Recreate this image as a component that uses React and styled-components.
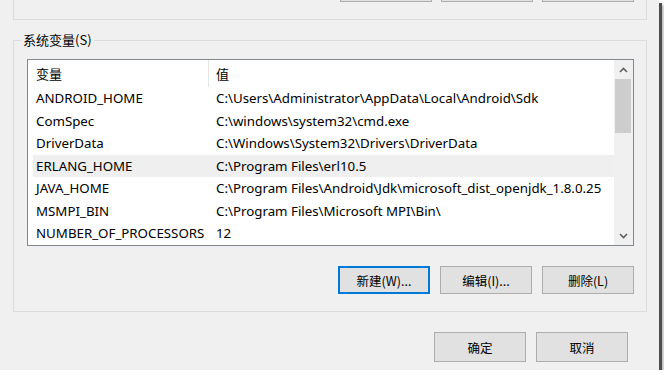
import React from "react";
import styled, { createGlobalStyle } from "styled-components";

const GlobalStyle = createGlobalStyle`
  html, body {
    margin: 0;
    padding: 0;
    background: #ffffff;
  }
  body {
    font-family: "Noto Sans", "Noto Sans CJK SC", sans-serif;
    font-size: 13.3px;
    color: #000;
  }
`;

const Window = styled.div`
  width: 659px;
  height: 370px;
  box-sizing: border-box;
  padding: 0 12px 0 13px;
  background: #f0f0f0;
  overflow: hidden;
  display: flex;
  flex-direction: column;
  box-shadow: 3px 3px 0 #4d4d4d, 5px 5px 2px rgba(0, 0, 0, 0.25);
`;

const TopGroup = styled.div`
  margin-top: -40px;
  height: 60px;
  box-sizing: border-box;
  border: 1px solid #dcdcdc;
  display: flex;
  align-items: flex-end;
  justify-content: flex-end;
  padding: 0 12px 17px 0;
`;

const GroupBox = styled.fieldset`
  margin: 12px 0 0 0;
  padding: 0 12px 17px 13px;
  border: 1px solid #dcdcdc;
  min-width: 0;
`;

const Caption = styled.legend`
  margin-left: -6px;
  padding: 0 2px;
  line-height: 16px;
  font-family: "Noto Sans CJK SC", sans-serif;
  font-size: 13px;
`;

const List = styled.div`
  margin-top: 11px;
  height: 187px;
  box-sizing: border-box;
  border: 1px solid #828790;
  background: #fff;
  display: flex;
`;

const ListContent = styled.div`
  flex: 1;
  display: flex;
  flex-direction: column;
  overflow: hidden;
`;

const Header = styled.div`
  height: 27px;
  display: flex;
  flex-shrink: 0;
`;

const HeaderCell = styled.div`
  display: flex;
  align-items: center;
  padding-left: ${(p) => (p.$first ? "8px" : "7px")};
  width: ${(p) => (p.$first ? "172px" : "auto")};
  flex: ${(p) => (p.$first ? "none" : "1")};
  border-right: ${(p) => (p.$first ? "1px solid #e5e5e5" : "none")};
  font-family: "Noto Sans CJK SC", sans-serif;
  font-size: 13px;
`;

const Rows = styled.div`
  padding-left: 5px;
`;

const Row = styled.div`
  height: 22.5px;
  display: grid;
  grid-template-columns: 175px 1fr;
  align-items: center;
  background: ${(p) => (p.$selected ? "#efefef" : "transparent")};
  white-space: nowrap;
`;

const Cell = styled.span`
  padding-left: ${(p) => (p.$value ? "8px" : "3px")};
  overflow: hidden;
`;

const Scrollbar = styled.div`
  width: 19px;
  background: #f0f0f0;
  display: flex;
  flex-direction: column;
  align-items: center;
`;

const Arrow = styled.div`
  height: 19px;
  width: 100%;
  display: flex;
  align-items: center;
  justify-content: center;
  flex-shrink: 0;
`;

const Track = styled.div`
  flex: 1;
  width: 100%;
  box-sizing: border-box;
  padding: 0 2px 0 1px;
`;

const Thumb = styled.div`
  height: 54px;
  background: #cdcdcd;
`;

const ButtonRow = styled.div`
  display: flex;
  justify-content: flex-end;
  gap: ${(p) => p.$gap || 10}px;
  margin-top: ${(p) => p.$top || 0}px;
  padding-right: ${(p) => p.$right || 0}px;
`;

const Button = styled.button`
  width: 92px;
  height: ${(p) => p.$h || 28}px;
  box-sizing: border-box;
  margin: 0;
  padding: 0;
  background: #e1e1e1;
  border: ${(p) => (p.$focused ? "2px solid #0078d7" : "1px solid #adadad")};
  font-family: "Noto Sans CJK SC", sans-serif;
  font-size: 12.5px;
  color: #000;
`;

const Chevron = ({ up }) => (
  <svg width="9" height="6" viewBox="0 0 9 6">
    <path
      d={up ? "M1 5 L4.5 1.5 L8 5" : "M1 1 L4.5 4.5 L8 1"}
      fill="none"
      stroke="#606060"
      strokeWidth="1.6"
    />
  </svg>
);

const vars = [
  ["ANDROID_HOME", "C:\\Users\\Administrator\\AppData\\Local\\Android\\Sdk"],
  ["ComSpec", "C:\\windows\\system32\\cmd.exe"],
  ["DriverData", "C:\\Windows\\System32\\Drivers\\DriverData"],
  ["ERLANG_HOME", "C:\\Program Files\\erl10.5"],
  ["JAVA_HOME", "C:\\Program Files\\Android\\Jdk\\microsoft_dist_openjdk_1.8.0.25"],
  ["MSMPI_BIN", "C:\\Program Files\\Microsoft MPI\\Bin\\"],
  ["NUMBER_OF_PROCESSORS", "12"],
];

export default function App() {
  return (
    <>
      <GlobalStyle />
      <Window>
        {/* user variables group, scrolled mostly out of view */}
        <TopGroup>
          <ButtonRow $gap={9}>
            <Button aria-label="新建" />
            <Button aria-label="编辑" />
            <Button aria-label="删除" />
          </ButtonRow>
        </TopGroup>

        <GroupBox>
          <Caption>系统变量(S)</Caption>
          <List>
            <ListContent>
              <Header>
                <HeaderCell $first>变量</HeaderCell>
                <HeaderCell>值</HeaderCell>
              </Header>
              <Rows>
                {vars.map(([name, value]) => (
                  <Row key={name} $selected={name === "ERLANG_HOME"}>
                    <Cell>{name}</Cell>
                    <Cell $value>{value}</Cell>
                  </Row>
                ))}
              </Rows>
            </ListContent>
            <Scrollbar>
              <Arrow>
                <Chevron up />
              </Arrow>
              <Track>
                <Thumb />
              </Track>
              <Arrow>
                <Chevron />
              </Arrow>
            </Scrollbar>
          </List>
          <ButtonRow $top={20}>
            <Button $focused>新建(W)...</Button>
            <Button>编辑(I)...</Button>
            <Button>删除(L)</Button>
          </ButtonRow>
        </GroupBox>

        <ButtonRow $top={20} $right={19}>
          <Button $h={30}>确定</Button>
          <Button $h={30}>取消</Button>
        </ButtonRow>
      </Window>
    </>
  );
}
